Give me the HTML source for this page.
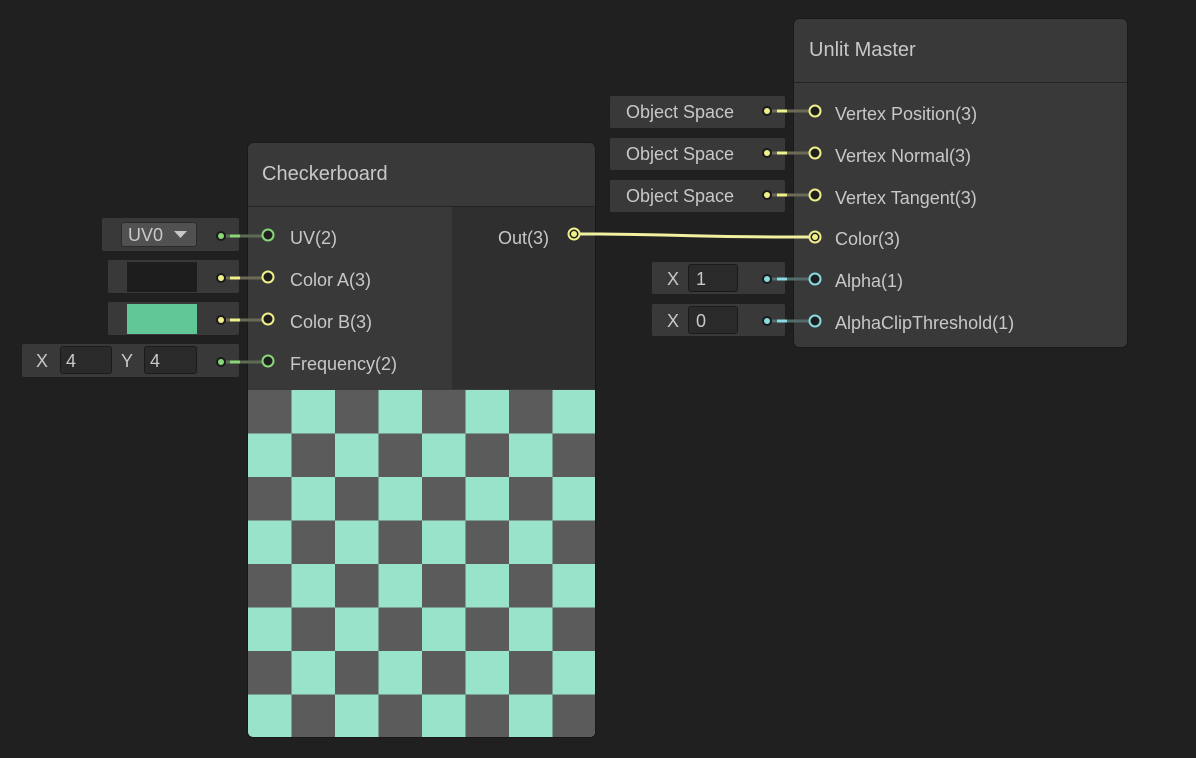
<!DOCTYPE html>
<html><head><style>
*{margin:0;padding:0;box-sizing:border-box}
body{width:1196px;height:758px;background:#202020;position:relative;overflow:hidden;font-family:"Liberation Sans",sans-serif;color:#c8c8c8;font-size:18px}
.a{position:absolute}
.node{background:#393939;border:1px solid #191919;border-radius:6px;overflow:hidden}
.box{background:#393939;border-radius:2px}
.t{position:absolute;white-space:nowrap}
.fld{background:#2a2a2a;border:1px solid #1a1a1a;border-radius:3px}
</style></head><body>
<!-- Checkerboard node -->
<div class="a node" style="left:247px;top:142px;width:349px;height:596px">
 <div class="t" style="left:14px;top:20px;font-size:20px">Checkerboard</div>
 <div class="a" style="left:0;top:63px;width:349px;height:1px;background:#242424"></div>
 <div class="a" style="left:204px;top:64px;width:145px;height:182px;background:#2f2f2f"></div>
 <svg class="a" style="left:0;top:247px" width="349" height="349">
  <rect width="349" height="349" fill="#98e3c9"/>
  <g fill="#5b5b5b">
  <rect x="0" y="0" width="43.5" height="43.5"/><rect x="87" y="0" width="43.5" height="43.5"/><rect x="174" y="0" width="43.5" height="43.5"/><rect x="261" y="0" width="43.5" height="43.5"/>
  <rect x="43.5" y="43.5" width="43.5" height="43.5"/><rect x="130.5" y="43.5" width="43.5" height="43.5"/><rect x="217.5" y="43.5" width="43.5" height="43.5"/><rect x="304.5" y="43.5" width="44.5" height="43.5"/>
  <rect x="0" y="87" width="43.5" height="43.5"/><rect x="87" y="87" width="43.5" height="43.5"/><rect x="174" y="87" width="43.5" height="43.5"/><rect x="261" y="87" width="43.5" height="43.5"/>
  <rect x="43.5" y="130.5" width="43.5" height="43.5"/><rect x="130.5" y="130.5" width="43.5" height="43.5"/><rect x="217.5" y="130.5" width="43.5" height="43.5"/><rect x="304.5" y="130.5" width="44.5" height="43.5"/>
  <rect x="0" y="174" width="43.5" height="43.5"/><rect x="87" y="174" width="43.5" height="43.5"/><rect x="174" y="174" width="43.5" height="43.5"/><rect x="261" y="174" width="43.5" height="43.5"/>
  <rect x="43.5" y="217.5" width="43.5" height="43.5"/><rect x="130.5" y="217.5" width="43.5" height="43.5"/><rect x="217.5" y="217.5" width="43.5" height="43.5"/><rect x="304.5" y="217.5" width="44.5" height="43.5"/>
  <rect x="0" y="261" width="43.5" height="43.5"/><rect x="87" y="261" width="43.5" height="43.5"/><rect x="174" y="261" width="43.5" height="43.5"/><rect x="261" y="261" width="43.5" height="43.5"/>
  <rect x="43.5" y="304.5" width="43.5" height="44.5"/><rect x="130.5" y="304.5" width="43.5" height="44.5"/><rect x="217.5" y="304.5" width="43.5" height="44.5"/><rect x="304.5" y="304.5" width="44.5" height="44.5"/>
  </g>
 </svg>
 <div class="t" style="left:42px;top:85px">UV(2)</div>
 <div class="t" style="left:42px;top:127px">Color A(3)</div>
 <div class="t" style="left:42px;top:169px">Color B(3)</div>
 <div class="t" style="left:42px;top:211px">Frequency(2)</div>
 <div class="t" style="left:250px;top:85px">Out(3)</div>
</div>
<!-- Unlit master -->
<div class="a node" style="left:793px;top:18px;width:335px;height:330px">
 <div class="t" style="left:15px;top:20px;font-size:20px">Unlit Master</div>
 <div class="a" style="left:0;top:63px;width:335px;height:1px;background:#242424"></div>
 <div class="t" style="left:41px;top:85px">Vertex Position(3)</div>
 <div class="t" style="left:41px;top:127px">Vertex Normal(3)</div>
 <div class="t" style="left:41px;top:169px">Vertex Tangent(3)</div>
 <div class="t" style="left:41px;top:210px">Color(3)</div>
 <div class="t" style="left:41px;top:252px">Alpha(1)</div>
 <div class="t" style="left:41px;top:294px">AlphaClipThreshold(1)</div>
</div>
<!-- left inputs -->
<div class="a box" style="left:102px;top:218px;width:137px;height:33px"></div>
<div class="a" style="left:121px;top:222px;width:76px;height:25px;background:#515151;border:1px solid #2a2a2a;border-radius:3px"></div>
<div class="t" style="left:128px;top:225px">UV0</div>
<svg class="a" style="left:174px;top:231px" width="14" height="8"><path d="M0 0H13L6.5 7Z" fill="#c8c8c8"/></svg>
<div class="a box" style="left:108px;top:260px;width:131px;height:33px"></div>
<div class="a" style="left:127px;top:262px;width:70px;height:30px;background:#1d1d1d"></div>
<div class="a box" style="left:108px;top:302px;width:131px;height:33px"></div>
<div class="a" style="left:127px;top:304px;width:70px;height:30px;background:#62c796"></div>
<div class="a box" style="left:22px;top:344px;width:217px;height:33px"></div>
<div class="t" style="left:36px;top:351px">X</div>
<div class="a fld" style="left:60px;top:346px;width:52px;height:28px"></div>
<div class="t" style="left:66px;top:351px">4</div>
<div class="t" style="left:121px;top:351px">Y</div>
<div class="a fld" style="left:144px;top:346px;width:53px;height:28px"></div>
<div class="t" style="left:150px;top:351px">4</div>
<!-- right inputs -->
<div class="a box" style="left:610px;top:96px;width:175px;height:32px"></div>
<div class="t" style="left:626px;top:102px">Object Space</div>
<div class="a box" style="left:610px;top:138px;width:175px;height:32px"></div>
<div class="t" style="left:626px;top:144px">Object Space</div>
<div class="a box" style="left:610px;top:180px;width:175px;height:32px"></div>
<div class="t" style="left:626px;top:186px">Object Space</div>
<div class="a box" style="left:652px;top:262px;width:133px;height:32px"></div>
<div class="t" style="left:667px;top:269px">X</div>
<div class="a fld" style="left:688px;top:264px;width:50px;height:28px"></div>
<div class="t" style="left:696px;top:269px">1</div>
<div class="a box" style="left:652px;top:304px;width:133px;height:32px"></div>
<div class="t" style="left:667px;top:311px">X</div>
<div class="a fld" style="left:688px;top:306px;width:50px;height:28px"></div>
<div class="t" style="left:696px;top:311px">0</div>
<!-- wires & ports -->
<svg class="a" style="left:0;top:0" width="1196" height="758">
 <g stroke-width="3">
  <line x1="226" y1="236" x2="263" y2="236" stroke="#5d6b55"/><line x1="230" y1="236" x2="240" y2="236" stroke="#8ad77a"/>
  <line x1="226" y1="278" x2="263" y2="278" stroke="#6b6b55"/><line x1="230" y1="278" x2="240" y2="278" stroke="#f0f08a"/>
  <line x1="226" y1="320" x2="263" y2="320" stroke="#6b6b55"/><line x1="230" y1="320" x2="240" y2="320" stroke="#f0f08a"/>
  <line x1="226" y1="362" x2="263" y2="362" stroke="#5d6b55"/><line x1="230" y1="362" x2="240" y2="362" stroke="#8ad77a"/>
  <g stroke="#6b6b55"><line x1="772" y1="111" x2="810" y2="111"/><line x1="772" y1="153" x2="810" y2="153"/><line x1="772" y1="195" x2="810" y2="195"/></g>
  <g stroke="#f0f08a"><line x1="777" y1="111" x2="787" y2="111"/><line x1="777" y1="153" x2="787" y2="153"/><line x1="777" y1="195" x2="787" y2="195"/></g>
  <g stroke="#556b6b"><line x1="772" y1="279" x2="810" y2="279"/><line x1="772" y1="321" x2="810" y2="321"/></g>
  <g stroke="#8adbe0"><line x1="777" y1="279" x2="787" y2="279"/><line x1="777" y1="321" x2="787" y2="321"/></g>
  <path d="M580 234 L600 234 C700 235 700 237 790 237 L810 237" fill="none" stroke="#f0f0a0"/>
 </g>
 <g>
  <circle cx="221" cy="236" r="5" fill="#1a1a1a"/><circle cx="221" cy="236" r="3" fill="#8ad77a"/>
  <circle cx="221" cy="278" r="5" fill="#1a1a1a"/><circle cx="221" cy="278" r="3" fill="#f0f08a"/>
  <circle cx="221" cy="320" r="5" fill="#1a1a1a"/><circle cx="221" cy="320" r="3" fill="#f0f08a"/>
  <circle cx="221" cy="362" r="5" fill="#1a1a1a"/><circle cx="221" cy="362" r="3" fill="#8ad77a"/>
  <circle cx="767" cy="111" r="5" fill="#1a1a1a"/><circle cx="767" cy="111" r="3" fill="#f0f08a"/>
  <circle cx="767" cy="153" r="5" fill="#1a1a1a"/><circle cx="767" cy="153" r="3" fill="#f0f08a"/>
  <circle cx="767" cy="195" r="5" fill="#1a1a1a"/><circle cx="767" cy="195" r="3" fill="#f0f08a"/>
  <circle cx="767" cy="279" r="5" fill="#1a1a1a"/><circle cx="767" cy="279" r="3" fill="#8adbe0"/>
  <circle cx="767" cy="321" r="5" fill="#1a1a1a"/><circle cx="767" cy="321" r="3" fill="#8adbe0"/>
 </g>
 <g fill="#1e1e1e" stroke-width="2">
  <circle cx="268" cy="235" r="5.5" stroke="#8ad77a"/>
  <circle cx="268" cy="277" r="5.5" stroke="#f0f08a"/>
  <circle cx="268" cy="319" r="5.5" stroke="#f0f08a"/>
  <circle cx="268" cy="361" r="5.5" stroke="#8ad77a"/>
  <circle cx="574" cy="234" r="5.5" stroke="#f0f08a"/>
  <circle cx="815" cy="111" r="5.5" stroke="#f0f08a"/>
  <circle cx="815" cy="153" r="5.5" stroke="#f0f08a"/>
  <circle cx="815" cy="195" r="5.5" stroke="#f0f08a"/>
  <circle cx="815" cy="237" r="5.5" stroke="#f0f08a"/>
  <circle cx="815" cy="279" r="5.5" stroke="#8adbe0"/>
  <circle cx="815" cy="321" r="5.5" stroke="#8adbe0"/>
 </g>
 <circle cx="574" cy="234" r="3" fill="#f0f08a"/>
 <circle cx="815" cy="237" r="3" fill="#f0f08a"/>
</svg>
</body></html>
